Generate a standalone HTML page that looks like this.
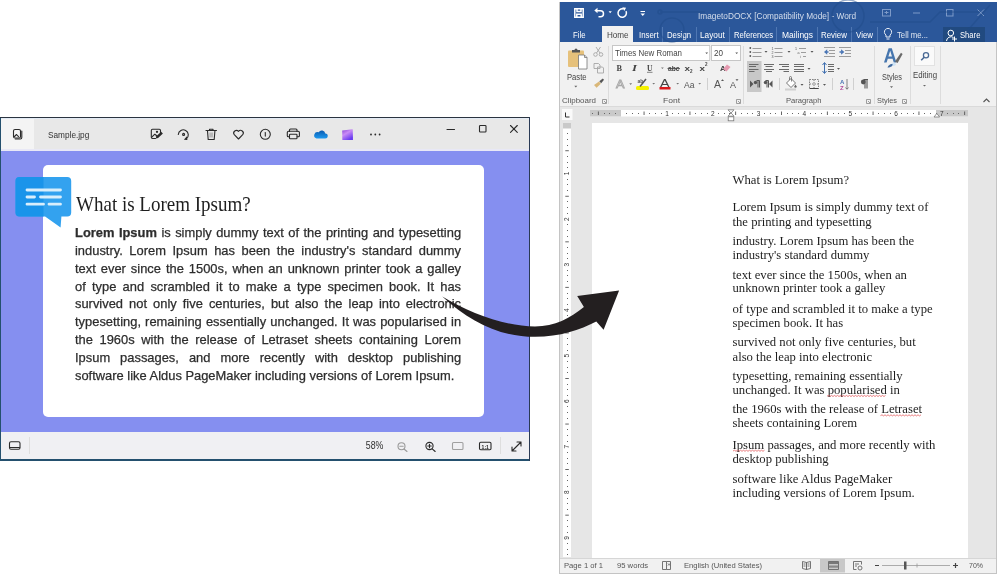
<!DOCTYPE html>
<html><head><meta charset="utf-8">
<style>
*{margin:0;padding:0;box-sizing:border-box}
html,body{width:1000px;height:579px;overflow:hidden;background:#fff;font-family:"Liberation Sans",sans-serif}
.a{position:absolute}
.t{position:absolute;white-space:pre;line-height:1}
.pv{position:absolute;left:75px;width:383px;white-space:nowrap;font-size:12.8px;line-height:1;color:#2d2d2d;-webkit-text-stroke:0.25px #2d2d2d;text-align:justify;text-align-last:justify;transform:scaleX(1.008);transform-origin:0 0}
.pv.last{text-align:left;text-align-last:left}
.wd{position:absolute;left:732.5px;white-space:pre;font-family:"Liberation Serif",serif;font-size:12.7px;line-height:1;color:#1e1e1e}
.wt{position:absolute;white-space:pre;font-size:9px;line-height:1;transform-origin:0 0}
.rl{position:absolute;white-space:pre;font-size:8px;line-height:1;color:#555;transform-origin:0 0}
</style></head><body>
<div id="root" style="position:absolute;left:0;top:0;width:1000px;height:579px;overflow:hidden;will-change:transform;background:#fff">

<!-- ============ PHOTO VIEWER ============ -->
<div class="a" style="left:0;top:117px;width:530px;height:344px;background:#24506e"></div>
<div class="a" style="left:0;top:117px;width:530px;height:1px;background:#2a3440"></div>
<div class="a" style="left:529px;top:117px;width:1px;height:344px;background:#2a3a55"></div>
<div class="a" style="left:1px;top:118px;width:528px;height:341px;background:#e8e8e8"></div>
<div class="a" style="left:1px;top:118px;width:33px;height:33px;background:#f4f4f4"></div>
<div class="a" style="left:1px;top:118px;width:528px;height:1px;background:#e2eaf4"></div>
<div class="a" style="left:1px;top:149px;width:528px;height:2px;background:#e8e8f6"></div>
<div class="a" style="left:1px;top:151px;width:528px;height:281px;background:#858ff0"></div>
<div class="a" style="left:43px;top:165px;width:441px;height:252px;background:#fff;border-radius:5px"></div>
<div class="a" style="left:1px;top:432px;width:528px;height:27px;background:#f0f0f3"></div>

<div class="t" style="left:47.5px;top:130.6px;font-size:8.6px;color:#333;transform:scaleX(0.96);transform-origin:0 0">Sample.jpg</div>

<!-- body text -->
<div class="pv" style="top:227.4px"><b>Lorem Ipsum</b> is simply dummy text of the printing and typesetting</div>
<div class="pv" style="top:245.2px">industry. Lorem Ipsum has been the industry's standard dummy</div>
<div class="pv" style="top:262.9px">text ever since the 1500s, when an unknown printer took a galley</div>
<div class="pv" style="top:280.7px">of type and scrambled it to make a type specimen book. It has</div>
<div class="pv" style="top:298.4px">survived not only five centuries, but also the leap into electronic</div>
<div class="pv" style="top:316.2px">typesetting, remaining essentially unchanged. It was popularised in</div>
<div class="pv" style="top:334.0px">the 1960s with the release of Letraset sheets containing Lorem</div>
<div class="pv" style="top:351.7px">Ipsum passages, and more recently with desktop publishing</div>
<div class="pv last" style="top:369.5px">software like Aldus PageMaker including versions of Lorem Ipsum.</div>
<div class="t" style="left:75.5px;top:194px;font-family:'Liberation Serif',serif;font-size:21px;color:#1e1e1e;transform:scaleX(0.905);transform-origin:0 0">What is Lorem Ipsum?</div>

<svg class="a" style="left:0;top:0" width="1000" height="579" viewBox="0 0 1000 579">
<g fill="none" stroke="#2a2a2a" stroke-width="1.1" stroke-linecap="round" stroke-linejoin="round">
 <!-- photo app icon -->
 <rect x="13.5" y="129.5" width="7" height="8.5" rx="1.5"/>
 <path d="M21.8 131v6.5a1.5 1.5 0 0 1-1.5 1.5h-5"/>
 <path d="M14.5 136.5l2-2 2 2.2"/>
 <!-- edit -->
 <path d="M155.5 138.5h-3a1.2 1.2 0 0 1-1.2-1.2v-6.8a1.2 1.2 0 0 1 1.2-1.2h6.8a1.2 1.2 0 0 1 1.2 1.2v2.5"/>
 <path d="M151.8 137.2l3-3 2 1.5"/>
 <circle cx="157" cy="131.8" r="0.6" fill="#2a2a2a"/>
 <!-- rotate -->
 <path d="M178.3 134.5a5 5 0 1 1 8 4.3"/>
 <circle cx="183.6" cy="134.4" r="1"/>
 <!-- trash -->
 <path d="M206 130.5h10.5M209.5 130v-0.7h3.5v0.7M207.5 131l0.7 8.5h6l0.7-8.5"/>
 <!-- heart -->
 <path d="M238.5 139l-4.2-4.3a2.6 2.6 0 0 1 4.2-3.3a2.6 2.6 0 0 1 4.2 3.3z"/>
 <!-- info -->
 <circle cx="265.3" cy="134.3" r="5"/>
 <path d="M265.3 132.6v3.5"/>
 <!-- print -->
 <path d="M289.5 131.5v-1.5a1 1 0 0 1 1-1h5.5a1 1 0 0 1 1 1v1.5"/>
 <path d="M289.5 136.8h-1.2a1 1 0 0 1-1-1v-3.3a1.3 1.3 0 0 1 1.3-1.3h9.5a1.3 1.3 0 0 1 1.3 1.3v3.3a1 1 0 0 1-1 1h-1.2"/>
 <rect x="289.5" y="134.3" width="7.5" height="4.5" rx="0.8"/>
 <!-- window controls -->
 <path d="M447 129.5h7.5"/>
 <rect x="479.5" y="125.5" width="6.5" height="6.5" rx="0.8"/>
 <path d="M510.5 125.5l6.8 6.8M517.3 125.5l-6.8 6.8"/>
 <!-- status bar -->
 <rect x="9.5" y="441.8" width="10.5" height="7.5" rx="1.5"/>
 <path d="M10 447.5h9.5"/>
 <circle cx="401.5" cy="446.3" r="3.5" stroke="#9a9a9a"/>
 <path d="M399.8 446.3h3.4M404 449l3 2.5" stroke="#9a9a9a"/>
 <circle cx="429.5" cy="446" r="3.6"/>
 <path d="M427.7 446h3.6M429.5 444.2v3.6M432.2 448.8l3 2.7"/>
 <rect x="452.5" y="442.5" width="10.5" height="7" rx="1" stroke="#a0a0a0"/>
 <rect x="479.5" y="442.3" width="11.5" height="7.5" rx="1.2"/>
 <path d="M512 451l9-9M521 446v-4h-4M512 447v4h4"/>
</g>
<g fill="#2a2a2a">
 <path d="M155.8 138.6l0.5-2.3 4.8-4.5 1.8 1.8-4.8 4.5z"/>
 <path d="M186.8 136.3l0.6 3.6-3.5-0.2z"/>
 <circle cx="371" cy="134.5" r="0.9"/><circle cx="375.3" cy="134.5" r="0.9"/><circle cx="379.6" cy="134.5" r="0.9"/>
 <rect x="209.3" y="132.5" width="3.8" height="5" fill="#b8b8b8"/>
</g>
<text x="481.6" y="448.6" font-family="Liberation Sans" font-size="6.2" font-weight="bold" fill="#2a2a2a" textLength="7.3" lengthAdjust="spacingAndGlyphs">1:1</text>
<text x="365.8" y="449" font-family="Liberation Sans" font-size="10" fill="#303030" textLength="17.6" lengthAdjust="spacingAndGlyphs">58%</text>
<path d="M500.5 437v17M29.5 437v17" stroke="#dedede" stroke-width="1"/>
<!-- onedrive cloud -->
<defs>
 <linearGradient id="od" x1="0" y1="0" x2="0" y2="1"><stop offset="0" stop-color="#0a5bb0"/><stop offset="1" stop-color="#1e9af0"/></linearGradient>
 <linearGradient id="cc" x1="0" y1="0" x2="0.6" y2="1"><stop offset="0" stop-color="#8a47d8"/><stop offset="0.45" stop-color="#c98af5"/><stop offset="1" stop-color="#6a3cf0"/></linearGradient>
</defs>
<path d="M316.5 138.6h8.5a2.6 2.6 0 0 0 0.3-5.2a3.6 3.6 0 0 0-6.6-1.2a2.9 2.9 0 0 0-2.2 6.4z" fill="url(#od)"/>
<path d="M342.2 130.5l10.5-1.2 0.3 10.6h-10.7z" fill="url(#cc)"/>
<!-- speech bubble -->
<path d="M19.5 177h47.7a4 4 0 0 1 4 4v31.6a4 4 0 0 1-4 4h-5.8l-0.8 11-15.5-11h-25.6a4 4 0 0 1-4-4v-31.6a4 4 0 0 1 4-4z" fill="#33a2ef"/>
<path d="M19.5 177h24v39.6h-24a4 4 0 0 1-4-4v-31.6a4 4 0 0 1 4-4z" fill="#1a94ea"/>
<g stroke="#d8eefc" stroke-width="2.8" stroke-linecap="round">
 <path d="M27 190h33.5M27 197h7.5M40.5 197h20M27 204.2h16.5M49 204.2h11.5"/>
</g>
</svg>

<!-- ============ WORD ============ -->
<div class="a" style="left:559px;top:2px;width:438px;height:572px;background:#c4c4c4"></div>
<div class="a" style="left:560px;top:2px;width:437px;height:40px;background:#2b579a"></div>
<div class="a" style="left:560px;top:42px;width:436px;height:64px;background:#f1f1f1"></div>
<div class="a" style="left:560px;top:106px;width:436px;height:1px;background:#dadada"></div>
<div class="a" style="left:560px;top:107px;width:436px;height:451px;background:#e6e6e6"></div>
<div class="a" style="left:592px;top:123px;width:376px;height:435px;background:#fff"></div>
<div class="a" style="left:560px;top:558px;width:436px;height:15px;background:#f1f1f1;border-top:1px solid #d6d6d6"></div>
<!-- home tab -->
<div class="a" style="left:602px;top:26px;width:31px;height:17px;background:#f1f1f1"></div>
<!-- share -->
<div class="a" style="left:943px;top:27px;width:42px;height:15px;background:#214a80"></div>
<!-- tab dividers -->
<div class="a" style="left:662px;top:27px;width:1px;height:15px;background:#4f77b3"></div>
<div class="a" style="left:696px;top:27px;width:1px;height:15px;background:#4f77b3"></div>
<div class="a" style="left:729px;top:27px;width:1px;height:15px;background:#4f77b3"></div>
<div class="a" style="left:776px;top:27px;width:1px;height:15px;background:#4f77b3"></div>
<div class="a" style="left:817px;top:27px;width:1px;height:15px;background:#4f77b3"></div>
<div class="a" style="left:851px;top:27px;width:1px;height:15px;background:#4f77b3"></div>
<div class="a" style="left:877px;top:27px;width:1px;height:15px;background:#4f77b3"></div>

<div class="wt" style="left:697.5px;top:11.5px;color:#d5deec;transform:scaleX(0.92)">ImagetoDOCX [Compatibility Mode] - Word</div>
<div class="wt" style="left:573px;top:30.5px;color:#fff;transform:scaleX(0.86)">File</div>
<div class="wt" style="left:606.5px;top:30.5px;color:#444;transform:scaleX(0.9)">Home</div>
<div class="wt" style="left:638.5px;top:30.5px;color:#fff;transform:scaleX(0.87)">Insert</div>
<div class="wt" style="left:667px;top:30.5px;color:#fff;transform:scaleX(0.86)">Design</div>
<div class="wt" style="left:700px;top:30.5px;color:#fff;transform:scaleX(0.92)">Layout</div>
<div class="wt" style="left:734px;top:30.5px;color:#fff;transform:scaleX(0.85)">References</div>
<div class="wt" style="left:782px;top:30.5px;color:#fff;transform:scaleX(0.94)">Mailings</div>
<div class="wt" style="left:821px;top:30.5px;color:#fff;transform:scaleX(0.88)">Review</div>
<div class="wt" style="left:856px;top:30.5px;color:#fff;transform:scaleX(0.88)">View</div>
<div class="wt" style="left:897px;top:30.5px;color:#dfe6f1;transform:scaleX(0.86)">Tell me...</div>
<div class="wt" style="left:960px;top:30.5px;color:#fff;transform:scaleX(0.85)">Share</div>

<svg class="a" style="left:0;top:0" width="1000" height="579" viewBox="0 0 1000 579" font-family="Liberation Sans">
<!-- title bar icons -->
<g fill="none" stroke="#fff" stroke-width="1.5">
 <path d="M574.8 8.8h8.4v8.4h-8.4z"/>
 <path d="M577 9v2.6h4v-2.6M576.8 17v-2.8h4.4v2.8"/>
 <path d="M597 10.8h3.5a3 3 0 0 1 0 6h-2"/>
 <path d="M626 11.2a4.2 4.2 0 1 1-2.6-2.2"/>
</g>
<g fill="#fff">
 <path d="M594.3 10.5l3.2-2.8v5.6z"/>
 <path d="M608.6 11.3h3.2l-1.6 2z"/>
 <path d="M622.3 7.3l3.8 0.4-1.8 3.3z"/>
 <rect x="640.5" y="11" width="4.5" height="1"/>
 <path d="M640.5 13.5h4.5l-2.25 2.5z"/>
</g>
<g fill="none" stroke="#7d9ac8" stroke-width="1">
 <rect x="882.5" y="9.5" width="8" height="6.5"/>
 <path d="M884.5 12.5h4M886.5 11v3"/>
 <path d="M913 13h7"/>
 <rect x="946.5" y="9.5" width="6.5" height="6.5"/>
 <path d="M977.5 9.5l6.5 6.5M984 9.5l-6.5 6.5"/>
</g>
<!-- faint decorative -->
<g fill="none" stroke="#1f4a88" stroke-width="1.6" opacity="0.45">
 <circle cx="848" cy="16" r="16"/>
 <circle cx="672" cy="30" r="12"/>
 <path d="M660 12h45M870 22h60l10-10h40M968 30l22-25"/>
 <circle cx="660" cy="12" r="2"/>
</g>
<!-- tell me bulb -->
<g fill="none" stroke="#e6ecf5" stroke-width="1">
 <path d="M886 37v-2a3.6 3.6 0 1 1 4 0v2z"/>
 <path d="M886.5 39h3"/>
 <circle cx="950.8" cy="33" r="2.8" stroke="#fff"/>
 <path d="M946.5 41a4.5 4.5 0 0 1 7-3.5M954.5 36.5v5M952 39h5" stroke="#fff"/>
</g>
<!-- group separators -->
<g stroke="#dcdcdc" stroke-width="1">
 <path d="M608.5 46v58M743.5 46v58M874.5 46v58M910.5 46v58M940.5 46v58"/>
 <path d="M707.5 78v12M779.5 78v12M832.5 78v12M853.5 78v12" stroke="#d0d0d0"/>
</g>
<!-- ===== clipboard ===== -->
<rect x="568" y="50.5" width="16" height="16.5" rx="1" fill="#e6c17b"/>
<path d="M572 52.5v-2.5h2.5a1.5 1.5 0 0 1 3 0h2.5v2.5z" fill="#555"/>
<path d="M578.5 55h6l2.5 2.5v11.5h-8.5z" fill="#fff" stroke="#777" stroke-width="0.8"/>
<path d="M584.5 55v2.5h2.5" fill="none" stroke="#777" stroke-width="0.8"/>
<text x="567" y="79.5" font-size="8.6" fill="#444" textLength="19.5" lengthAdjust="spacingAndGlyphs">Paste</text>
<path d="M574.3 85.8h3l-1.5 1.6z" fill="#666"/>
<g fill="none" stroke="#a6a6a6" stroke-width="0.9">
 <circle cx="595.5" cy="54.5" r="1.8"/><circle cx="601" cy="54.5" r="1.8"/>
 <path d="M596.5 53l4-6M600 53l-4-6"/>
 <path d="M594 63.5h4.5l1.5 1.5v3.5h-6zM597.5 67h5l1 1v5h-6z"/>
</g>
<path d="M594 85l5-3.5 1.8 2.2-4.2 4z" fill="#d9b778"/>
<path d="M599.3 81.3l3.5-2.8 1.2 1.2-2.8 3.6z" fill="#555"/>
<text x="562" y="102.8" font-size="8" fill="#555" textLength="34" lengthAdjust="spacingAndGlyphs">Clipboard</text>
<g fill="none" stroke="#888" stroke-width="0.8"><path d="M602.5 99.5h4v4h-4zM604 101l2 2"/></g>
<!-- ===== font ===== -->
<rect x="612.5" y="45.5" width="97" height="15" fill="#fff" stroke="#c6c6c6"/>
<rect x="711.5" y="45.5" width="29" height="15" fill="#fff" stroke="#c6c6c6"/>
<path d="M710 46v14" stroke="#e2e2e2"/>
<text x="615" y="56.3" font-size="8.6" fill="#444" textLength="67" lengthAdjust="spacingAndGlyphs">Times New Roman</text>
<text x="714" y="56.3" font-size="8.6" fill="#444" textLength="9" lengthAdjust="spacingAndGlyphs">20</text>
<path d="M705.3 52.5h2.8l-1.4 1.6zM735.3 52.5h2.8l-1.4 1.6z" fill="#555"/>
<g fill="#444" font-family="Liberation Serif" font-weight="bold">
 <text x="616.5" y="71" font-size="8.5" textLength="5.5" lengthAdjust="spacingAndGlyphs">B</text>
 <text x="632" y="71" font-size="8.5" font-style="italic" textLength="5" lengthAdjust="spacingAndGlyphs">I</text>
 <text x="647" y="71" font-size="8.5" textLength="5.5" lengthAdjust="spacingAndGlyphs">U</text>
</g>
<path d="M647 72.3h5.5" stroke="#666" stroke-width="0.8"/>
<g fill="#444" font-weight="bold">
 <text x="668" y="71" font-size="7.5" textLength="11.5" lengthAdjust="spacingAndGlyphs">abc</text>
 <text x="684.5" y="71" font-size="8" textLength="5.5" lengthAdjust="spacingAndGlyphs">x</text>
 <text x="690" y="73" font-size="4.5">2</text>
 <text x="699.5" y="71" font-size="8" textLength="5.5" lengthAdjust="spacingAndGlyphs">x</text>
 <text x="705" y="66" font-size="4.5">2</text>
</g>
<path d="M667.5 68.5h12.5" stroke="#444" stroke-width="0.8"/>
<path d="M661 67.5h2.8l-1.4 1.6zM629.3 83.3h2.8l-1.4 1.6zM652.3 83h2.8l-1.4 1.6zM676.3 83h2.8l-1.4 1.6zM698.3 83h2.8l-1.4 1.6z" fill="#777"/>
<!-- clear formatting -->
<text x="720" y="70.5" font-size="8" fill="#444" font-weight="bold">A</text>
<path d="M723 69l4-4.5 3.5 2.5-4 4.5z" fill="#e59ab0"/>
<!-- text effects -->
<text x="616" y="87.5" font-size="11" fill="#f1f1f1" stroke="#a8a8a8" stroke-width="0.8" textLength="8.5" lengthAdjust="spacingAndGlyphs">A</text>
<!-- highlighter -->
<rect x="636" y="86" width="13" height="4" rx="1.5" fill="#f5f200"/>
<path d="M640 86.5l6-7.5" stroke="#555" stroke-width="1.5"/>
<text x="637.5" y="83" font-size="5" fill="#555" font-weight="bold">ab</text>
<!-- font color -->
<text x="660" y="87.3" font-size="10" fill="#444" textLength="9.5" lengthAdjust="spacingAndGlyphs">A</text>
<rect x="659.5" y="87" width="11" height="2.5" fill="#d9191c"/>
<text x="684" y="87.5" font-size="9.5" fill="#555" textLength="10.5" lengthAdjust="spacingAndGlyphs">Aa</text>
<text x="714" y="88" font-size="10" fill="#555" textLength="7" lengthAdjust="spacingAndGlyphs">A</text>
<text x="730" y="88" font-size="8.5" fill="#555" textLength="6" lengthAdjust="spacingAndGlyphs">A</text>
<path d="M721 81l1.5-1.8 1.5 1.8zM735.5 79.3h3l-1.5 1.8z" fill="#555"/>
<text x="663" y="102.8" font-size="8" fill="#555" textLength="17" lengthAdjust="spacingAndGlyphs">Font</text>
<g fill="none" stroke="#888" stroke-width="0.8"><path d="M736.5 99.5h4v4h-4zM738 101l2 2"/></g>
<!-- ===== paragraph ===== -->
<rect x="747" y="61" width="14.5" height="31" fill="#c8c8c8"/>
<g fill="#555">
 <circle cx="750.3" cy="48" r="0.9"/><circle cx="750.3" cy="52" r="0.9"/><circle cx="750.3" cy="56" r="0.9"/>
 <text x="771.5" y="50" font-size="3.6">1</text><text x="771.5" y="54" font-size="3.6">2</text><text x="771.5" y="58" font-size="3.6">3</text>
 <text x="795" y="50" font-size="3.6">1</text><text x="797.5" y="54" font-size="3.6">a</text><text x="800" y="58" font-size="3.6">i</text>
 <path d="M764.5 51h3l-1.5 1.7zM787.5 51h3l-1.5 1.7zM810.5 51h3l-1.5 1.7zM807.5 68h3l-1.5 1.7zM837 68h3l-1.5 1.7zM800.5 84h3l-1.5 1.7zM823 84h3l-1.5 1.7z"/>
</g>
<g stroke="#9c9c9c" stroke-width="1">
 <path d="M752.5 48.5h9M752.5 52.5h9M752.5 56.5h9M774.5 48.5h8M774.5 52.5h8M774.5 56.5h8M799 48.5h7M801 52.5h5M803 56.5h3"/>
 <path d="M824 47.5h11M829 50.5h6M829 53.5h6M824 56.5h11M839 47.5h12M845 50.5h6M845 53.5h6M839 56.5h12"/>
</g>
<path d="M824 52l3.2-2.8v5.6zM844.3 52l-3.2-2.8v5.6z" fill="#4a76b5"/>
<path d="M826.5 52h2M839.5 52h2" stroke="#4a76b5" stroke-width="1.3"/>
<g stroke="#6a6a6a" stroke-width="1">
 <path d="M749 64.5h9.5M749 66.5h7M749 69.5h9.5M749 71.5h5.5"/>
 <path d="M764 64.5h10M765.5 66.5h7M764 69.5h10M766 71.5h6"/>
 <path d="M779 64.5h10M782 66.5h7M779 69.5h10M783.5 71.5h5.5"/>
 <path d="M794 64.5h10M794 66.5h10M794 69.5h10M794 71.5h10"/>
 <path d="M828 64.5h6M828 66.5h6M828 69.5h6M828 71.5h6"/>
</g>
<path d="M824.5 63v10M822.5 65l2-2.5 2 2.5M822.5 71l2 2.5 2-2.5" fill="none" stroke="#3f6fb0" stroke-width="1"/>
<g fill="#555">
 <path d="M750 80.5l3.5 3.5-3.5 3.5z"/>
 <path d="M756.5 80.5h3v7M758 80.5v7" stroke="#555" stroke-width="1" fill="none"/>
 <circle cx="755.5" cy="82.5" r="1.7"/>
 <path d="M772.5 80.5l-3.5 3.5 3.5 3.5z"/>
 <path d="M765.5 80.5h3v7M767 80.5v7" stroke="#555" stroke-width="1" fill="none"/>
 <circle cx="765.5" cy="82.5" r="1.7"/>
 <path d="M863.5 79.5h4.5M865 79.5v9M867 79.5v9" stroke="#555" stroke-width="1.1" fill="none"/>
 <circle cx="863.3" cy="82" r="2.4"/>
</g>
<path d="M786.5 83l4.5-4.5 4.5 4.5-4.5 4.5z" fill="#fff" stroke="#666" stroke-width="0.9"/><path d="M789.5 80v-2.5a1 1 0 0 1 2 0v4" fill="none" stroke="#666" stroke-width="0.8"/><path d="M795.5 84.5l1.2 2a1.2 1.2 0 0 1-2.4 0z" fill="#666"/>
<rect x="785" y="88.5" width="11" height="2" fill="#d0d0d0"/>
<g fill="none" stroke="#777" stroke-width="0.9" stroke-dasharray="1.5 1"><path d="M809.5 79.5h9v9h-9zM814 79.5v9M809.5 84h9"/></g>
<path d="M809.5 88.5h9" stroke="#444" stroke-width="1"/>
<text x="840" y="84" font-size="6" fill="#4a76b5" font-weight="bold">A</text>
<text x="840" y="90" font-size="6" fill="#b04a9a" font-weight="bold">Z</text>
<path d="M847 79v10M845.5 87.5l1.5 1.8 1.5-1.8" fill="none" stroke="#666" stroke-width="0.8"/>
<text x="786" y="102.8" font-size="8" fill="#555" textLength="35.5" lengthAdjust="spacingAndGlyphs">Paragraph</text>
<g fill="none" stroke="#888" stroke-width="0.8"><path d="M866.5 99.5h4v4h-4zM868 101l2 2"/></g>
<!-- ===== styles ===== -->
<path d="M884 62.5l4.6-14.3h3.2l4.6 14.3h-2.6l-1.2-3.8h-4.8l-1.2 3.8zM888.4 56.4h3.6l-1.8-5.6z" fill="#4676ae"/>
<path d="M895 61.5l6-8.8 1.6 1.2-5 9.2z" fill="#6a6a6a"/><ellipse cx="893.6" cy="64.3" rx="2.2" ry="1.8" fill="#cfe3f5"/><path d="M887.5 67.5c1-2.5 3-4 5-3.5c0.5 1.8-1.5 3.5-5 3.5z" fill="#3f6aa0"/>
<text x="882" y="79.5" font-size="8.6" fill="#444" textLength="20" lengthAdjust="spacingAndGlyphs">Styles</text>
<path d="M890 86.3h3l-1.5 1.6z" fill="#666"/>
<text x="877" y="102.8" font-size="8" fill="#555" textLength="20" lengthAdjust="spacingAndGlyphs">Styles</text>
<g fill="none" stroke="#888" stroke-width="0.8"><path d="M902.5 99.5h4v4h-4zM904 101l2 2"/></g>
<!-- editing -->
<rect x="914.5" y="46.5" width="20" height="19" fill="#fafafa" stroke="#e2e2e2"/>
<circle cx="926" cy="55.3" r="2.6" fill="none" stroke="#4a6a95" stroke-width="1.3"/>
<path d="M924.2 57.3l-3 3" stroke="#4a6a95" stroke-width="1.6"/>
<text x="913" y="77.5" font-size="8.6" fill="#444" textLength="24" lengthAdjust="spacingAndGlyphs">Editing</text>
<path d="M923 85h3l-1.5 1.6z" fill="#666"/>
<path d="M983.5 102l3-3 3 3" fill="none" stroke="#555" stroke-width="1.1"/>
</svg>
<svg class="a" style="left:0;top:0" width="1000" height="579" viewBox="0 0 1000 579" font-family="Liberation Sans">
<rect x="562" y="109" width="10.5" height="11" fill="#fafafa"/>
<path d="M565.5 112.5v4.5h4" fill="none" stroke="#333" stroke-width="1"/>
<rect x="590" y="110" width="378" height="6.5" fill="#fff"/>
<rect x="590" y="110" width="31" height="6.5" fill="#c9c9c9"/>
<rect x="936" y="110" width="32" height="6.5" fill="#c9c9c9"/>
<rect x="592" y="113" width="1" height="1" fill="#666"/>
<rect x="597.9" y="111.5" width="0.9" height="3.5" fill="#555"/>
<rect x="604" y="113" width="1" height="1" fill="#666"/>
<rect x="609" y="113" width="1" height="1" fill="#666"/>
<rect x="615" y="113" width="1" height="1" fill="#666"/>
<rect x="626" y="113" width="1" height="1" fill="#666"/>
<rect x="632" y="113" width="1" height="1" fill="#666"/>
<rect x="638" y="113" width="1" height="1" fill="#666"/>
<rect x="643.6" y="111.5" width="0.9" height="3.5" fill="#555"/>
<rect x="649" y="113" width="1" height="1" fill="#666"/>
<rect x="655" y="113" width="1" height="1" fill="#666"/>
<rect x="661" y="113" width="1" height="1" fill="#666"/>
<text x="667.0" y="115.8" font-size="6.5" fill="#333" text-anchor="middle">1</text>
<rect x="672" y="113" width="1" height="1" fill="#666"/>
<rect x="678" y="113" width="1" height="1" fill="#666"/>
<rect x="684" y="113" width="1" height="1" fill="#666"/>
<rect x="689.5" y="111.5" width="0.9" height="3.5" fill="#555"/>
<rect x="695" y="113" width="1" height="1" fill="#666"/>
<rect x="701" y="113" width="1" height="1" fill="#666"/>
<rect x="707" y="113" width="1" height="1" fill="#666"/>
<text x="712.8" y="115.8" font-size="6.5" fill="#333" text-anchor="middle">2</text>
<rect x="718" y="113" width="1" height="1" fill="#666"/>
<rect x="724" y="113" width="1" height="1" fill="#666"/>
<rect x="729" y="113" width="1" height="1" fill="#666"/>
<rect x="735.2" y="111.5" width="0.9" height="3.5" fill="#555"/>
<rect x="741" y="113" width="1" height="1" fill="#666"/>
<rect x="747" y="113" width="1" height="1" fill="#666"/>
<rect x="752" y="113" width="1" height="1" fill="#666"/>
<text x="758.6" y="115.8" font-size="6.5" fill="#333" text-anchor="middle">3</text>
<rect x="764" y="113" width="1" height="1" fill="#666"/>
<rect x="770" y="113" width="1" height="1" fill="#666"/>
<rect x="775" y="113" width="1" height="1" fill="#666"/>
<rect x="781.0" y="111.5" width="0.9" height="3.5" fill="#555"/>
<rect x="787" y="113" width="1" height="1" fill="#666"/>
<rect x="792" y="113" width="1" height="1" fill="#666"/>
<rect x="798" y="113" width="1" height="1" fill="#666"/>
<text x="804.4" y="115.8" font-size="6.5" fill="#333" text-anchor="middle">4</text>
<rect x="810" y="113" width="1" height="1" fill="#666"/>
<rect x="815" y="113" width="1" height="1" fill="#666"/>
<rect x="821" y="113" width="1" height="1" fill="#666"/>
<rect x="826.9" y="111.5" width="0.9" height="3.5" fill="#555"/>
<rect x="833" y="113" width="1" height="1" fill="#666"/>
<rect x="838" y="113" width="1" height="1" fill="#666"/>
<rect x="844" y="113" width="1" height="1" fill="#666"/>
<text x="850.2" y="115.8" font-size="6.5" fill="#333" text-anchor="middle">5</text>
<rect x="855" y="113" width="1" height="1" fill="#666"/>
<rect x="861" y="113" width="1" height="1" fill="#666"/>
<rect x="867" y="113" width="1" height="1" fill="#666"/>
<rect x="872.6" y="111.5" width="0.9" height="3.5" fill="#555"/>
<rect x="878" y="113" width="1" height="1" fill="#666"/>
<rect x="884" y="113" width="1" height="1" fill="#666"/>
<rect x="890" y="113" width="1" height="1" fill="#666"/>
<text x="896.0" y="115.8" font-size="6.5" fill="#333" text-anchor="middle">6</text>
<rect x="901" y="113" width="1" height="1" fill="#666"/>
<rect x="907" y="113" width="1" height="1" fill="#666"/>
<rect x="913" y="113" width="1" height="1" fill="#666"/>
<rect x="918.5" y="111.5" width="0.9" height="3.5" fill="#555"/>
<rect x="924" y="113" width="1" height="1" fill="#666"/>
<rect x="930" y="113" width="1" height="1" fill="#666"/>
<rect x="936" y="113" width="1" height="1" fill="#666"/>
<text x="941.8" y="115.8" font-size="6.5" fill="#333" text-anchor="middle">7</text>
<rect x="947" y="113" width="1" height="1" fill="#666"/>
<rect x="953" y="113" width="1" height="1" fill="#666"/>
<rect x="958" y="113" width="1" height="1" fill="#666"/>
<rect x="964.2" y="111.5" width="0.9" height="3.5" fill="#555"/>
<path d="M728 109.8h6l-3 3.3zM728 116.2h6l-3-3.3z" fill="#fff" stroke="#777" stroke-width="0.8"/>
<rect x="728.2" y="116.8" width="5.6" height="4" fill="#fff" stroke="#777" stroke-width="0.8"/>
<path d="M934 117l2.8-3.5 2.8 3.5z" fill="#fff" stroke="#777" stroke-width="0.8"/>
<rect x="563" y="123" width="8" height="434" fill="#fff"/>
<rect x="563" y="123" width="8" height="5.5" fill="#c9c9c9"/>
<rect x="567" y="133" width="1" height="1" fill="#666"/>
<rect x="567" y="139" width="1" height="1" fill="#666"/>
<rect x="567" y="145" width="1" height="1" fill="#666"/>
<rect x="565.3" y="150.3" width="3.5" height="0.9" fill="#555"/>
<rect x="567" y="156" width="1" height="1" fill="#666"/>
<rect x="567" y="162" width="1" height="1" fill="#666"/>
<rect x="567" y="167" width="1" height="1" fill="#666"/>
<text x="0" y="0" font-size="6.5" fill="#333" text-anchor="middle" transform="translate(569.3 173.5) rotate(-90)">1</text>
<rect x="567" y="179" width="1" height="1" fill="#666"/>
<rect x="567" y="184" width="1" height="1" fill="#666"/>
<rect x="567" y="190" width="1" height="1" fill="#666"/>
<rect x="565.3" y="195.8" width="3.5" height="0.9" fill="#555"/>
<rect x="567" y="201" width="1" height="1" fill="#666"/>
<rect x="567" y="207" width="1" height="1" fill="#666"/>
<rect x="567" y="213" width="1" height="1" fill="#666"/>
<text x="0" y="0" font-size="6.5" fill="#333" text-anchor="middle" transform="translate(569.3 219.1) rotate(-90)">2</text>
<rect x="567" y="224" width="1" height="1" fill="#666"/>
<rect x="567" y="230" width="1" height="1" fill="#666"/>
<rect x="567" y="236" width="1" height="1" fill="#666"/>
<rect x="565.3" y="241.4" width="3.5" height="0.9" fill="#555"/>
<rect x="567" y="247" width="1" height="1" fill="#666"/>
<rect x="567" y="253" width="1" height="1" fill="#666"/>
<rect x="567" y="258" width="1" height="1" fill="#666"/>
<text x="0" y="0" font-size="6.5" fill="#333" text-anchor="middle" transform="translate(569.3 264.6) rotate(-90)">3</text>
<rect x="567" y="270" width="1" height="1" fill="#666"/>
<rect x="567" y="275" width="1" height="1" fill="#666"/>
<rect x="567" y="281" width="1" height="1" fill="#666"/>
<rect x="565.3" y="286.9" width="3.5" height="0.9" fill="#555"/>
<rect x="567" y="293" width="1" height="1" fill="#666"/>
<rect x="567" y="298" width="1" height="1" fill="#666"/>
<rect x="567" y="304" width="1" height="1" fill="#666"/>
<text x="0" y="0" font-size="6.5" fill="#333" text-anchor="middle" transform="translate(569.3 310.1) rotate(-90)">4</text>
<rect x="567" y="315" width="1" height="1" fill="#666"/>
<rect x="567" y="321" width="1" height="1" fill="#666"/>
<rect x="567" y="327" width="1" height="1" fill="#666"/>
<rect x="565.3" y="332.5" width="3.5" height="0.9" fill="#555"/>
<rect x="567" y="338" width="1" height="1" fill="#666"/>
<rect x="567" y="344" width="1" height="1" fill="#666"/>
<rect x="567" y="350" width="1" height="1" fill="#666"/>
<text x="0" y="0" font-size="6.5" fill="#333" text-anchor="middle" transform="translate(569.3 355.7) rotate(-90)">5</text>
<rect x="567" y="361" width="1" height="1" fill="#666"/>
<rect x="567" y="367" width="1" height="1" fill="#666"/>
<rect x="567" y="372" width="1" height="1" fill="#666"/>
<rect x="565.3" y="378.0" width="3.5" height="0.9" fill="#555"/>
<rect x="567" y="384" width="1" height="1" fill="#666"/>
<rect x="567" y="389" width="1" height="1" fill="#666"/>
<rect x="567" y="395" width="1" height="1" fill="#666"/>
<text x="0" y="0" font-size="6.5" fill="#333" text-anchor="middle" transform="translate(569.3 401.2) rotate(-90)">6</text>
<rect x="567" y="406" width="1" height="1" fill="#666"/>
<rect x="567" y="412" width="1" height="1" fill="#666"/>
<rect x="567" y="418" width="1" height="1" fill="#666"/>
<rect x="565.3" y="423.6" width="3.5" height="0.9" fill="#555"/>
<rect x="567" y="429" width="1" height="1" fill="#666"/>
<rect x="567" y="435" width="1" height="1" fill="#666"/>
<rect x="567" y="441" width="1" height="1" fill="#666"/>
<text x="0" y="0" font-size="6.5" fill="#333" text-anchor="middle" transform="translate(569.3 446.8) rotate(-90)">7</text>
<rect x="567" y="452" width="1" height="1" fill="#666"/>
<rect x="567" y="458" width="1" height="1" fill="#666"/>
<rect x="567" y="463" width="1" height="1" fill="#666"/>
<rect x="565.3" y="469.1" width="3.5" height="0.9" fill="#555"/>
<rect x="567" y="475" width="1" height="1" fill="#666"/>
<rect x="567" y="480" width="1" height="1" fill="#666"/>
<rect x="567" y="486" width="1" height="1" fill="#666"/>
<text x="0" y="0" font-size="6.5" fill="#333" text-anchor="middle" transform="translate(569.3 492.3) rotate(-90)">8</text>
<rect x="567" y="498" width="1" height="1" fill="#666"/>
<rect x="567" y="503" width="1" height="1" fill="#666"/>
<rect x="567" y="509" width="1" height="1" fill="#666"/>
<rect x="565.3" y="514.7" width="3.5" height="0.9" fill="#555"/>
<rect x="567" y="520" width="1" height="1" fill="#666"/>
<rect x="567" y="526" width="1" height="1" fill="#666"/>
<rect x="567" y="532" width="1" height="1" fill="#666"/>
<text x="0" y="0" font-size="6.5" fill="#333" text-anchor="middle" transform="translate(569.3 537.9) rotate(-90)">9</text>
<rect x="567" y="543" width="1" height="1" fill="#666"/>
<rect x="567" y="549" width="1" height="1" fill="#666"/>
<rect x="567" y="554" width="1" height="1" fill="#666"/>
<g fill="#555" font-size="8">
<text x="564" y="568.3" textLength="39" lengthAdjust="spacingAndGlyphs">Page 1 of 1</text>
<text x="617" y="568.3" textLength="31" lengthAdjust="spacingAndGlyphs">95 words</text>
<text x="684" y="568.3" textLength="78" lengthAdjust="spacingAndGlyphs">English (United States)</text>
<text x="969" y="568.3" textLength="14" lengthAdjust="spacingAndGlyphs">70%</text>
</g>
<rect x="820" y="559" width="25" height="13.5" fill="#c8c8c8"/>
<g fill="none" stroke="#666" stroke-width="0.9">
<path d="M662.5 561.5h4v8h-4zM666.5 561.5h4v8h-4M668 563.5l2 2M670 563.5l-2 2"/>
<path d="M802.5 561.5l4 1v7l-4-1zM806.5 562.5l4-1v7l-4 1zM803.5 564h2M803.5 566h2M807.5 564h2M807.5 566h2"/>
<path d="M828.5 561.5h10v8h-10z" stroke="#666"/><rect x="829" y="562" width="9" height="2" fill="#777" stroke="none"/><rect x="829" y="565.5" width="9" height="2.2" fill="#888" stroke="none"/>
<path d="M853.5 561.5h8v3M853.5 561.5v8h3M855 564h4M855 566h2"/><circle cx="860" cy="568" r="2"/>
</g>
<path d="M875 565.5h4M953 565.5h5M955.5 563v5" stroke="#444" stroke-width="1.2"/>
<path d="M882 565.5h68" stroke="#999" stroke-width="0.8"/>
<path d="M917 563.5v4" stroke="#999" stroke-width="0.8"/>
<rect x="904" y="561.5" width="2.5" height="8" fill="#555"/>
</svg>
<div class="wd" style="top:173.6px">What is Lorem Ipsum?</div>
<div class="wd" style="top:201.4px">Lorem Ipsum is simply dummy text of</div>
<div class="wd" style="top:215.9px">the printing and typesetting</div>
<div class="wd" style="top:235.4px">industry. Lorem Ipsum has been the</div>
<div class="wd" style="top:249.4px">industry's standard dummy</div>
<div class="wd" style="top:268.7px">text ever since the 1500s, when an</div>
<div class="wd" style="top:282.4px">unknown printer took a galley</div>
<div class="wd" style="top:302.7px">of type and scrambled it to make a type</div>
<div class="wd" style="top:317.1px">specimen book. It has</div>
<div class="wd" style="top:336.3px">survived not only five centuries, but</div>
<div class="wd" style="top:350.7px">also the leap into electronic</div>
<div class="wd" style="top:369.9px">typesetting, remaining essentially</div>
<div class="wd" style="top:383.8px">unchanged. It was popularised in</div>
<div class="wd" style="top:403.0px">the 1960s with the release of Letraset</div>
<div class="wd" style="top:417.4px">sheets containing Lorem</div>
<div class="wd" style="top:439.4px">Ipsum passages, and more recently with</div>
<div class="wd" style="top:453.3px">desktop publishing</div>
<div class="wd" style="top:472.5px">software like Aldus PageMaker</div>
<div class="wd" style="top:486.9px">including versions of Lorem Ipsum.</div>
<svg class="a" style="left:0;top:0" width="1000" height="579" viewBox="0 0 1000 579"><path d="M827.0 396.2L828.5 395.4L830.0 396.5L831.5 395.4L833.0 396.5L834.5 395.4L836.0 396.5L837.5 395.4L839.0 396.5L840.5 395.4L842.0 396.5L843.5 395.4L845.0 396.5L846.5 395.4L848.0 396.5L849.5 395.4L851.0 396.5L852.5 395.4L854.0 396.5L855.5 395.4L857.0 396.5L858.5 395.4L860.0 396.5L861.5 395.4L863.0 396.5L864.5 395.4L866.0 396.5L867.5 395.4L869.0 396.5L870.5 395.4L872.0 396.5L873.5 395.4L875.0 396.5L876.5 395.4L878.0 396.5L879.5 395.4L881.0 396.5L882.5 395.4L884.0 396.5L885.5 395.4M880.5 415.6L882.0 414.8L883.5 415.9L885.0 414.8L886.5 415.9L888.0 414.8L889.5 415.9L891.0 414.8L892.5 415.9L894.0 414.8L895.5 415.9L897.0 414.8L898.5 415.9L900.0 414.8L901.5 415.9L903.0 414.8L904.5 415.9L906.0 414.8L907.5 415.9L909.0 414.8L910.5 415.9L912.0 414.8L913.5 415.9L915.0 414.8L916.5 415.9L918.0 414.8L919.5 415.9L921.0 414.8M733.0 451.0L734.5 450.2L736.0 451.3L737.5 450.2L739.0 451.3L740.5 450.2L742.0 451.3L743.5 450.2L745.0 451.3L746.5 450.2L748.0 451.3L749.5 450.2L751.0 451.3L752.5 450.2L754.0 451.3L755.5 450.2L757.0 451.3L758.5 450.2L760.0 451.3L761.5 450.2L763.0 451.3L764.5 450.2" fill="none" stroke="#e0484a" stroke-width="0.7"/></svg>
<svg class="a" style="left:0;top:0" width="1000" height="579" viewBox="0 0 1000 579">
<path d="M442.3 296.4C470 313 505 326.5 535 326.5C555 326.5 570 318 583.9 307L577.2 296.1L619.1 290.4L603.6 329.7L596.3 321.5C580 330 560 336.8 535 336.8C500 336.8 470 322 442.3 296.4z" fill="#231f20"/>
</svg>
</div>
</body></html>
